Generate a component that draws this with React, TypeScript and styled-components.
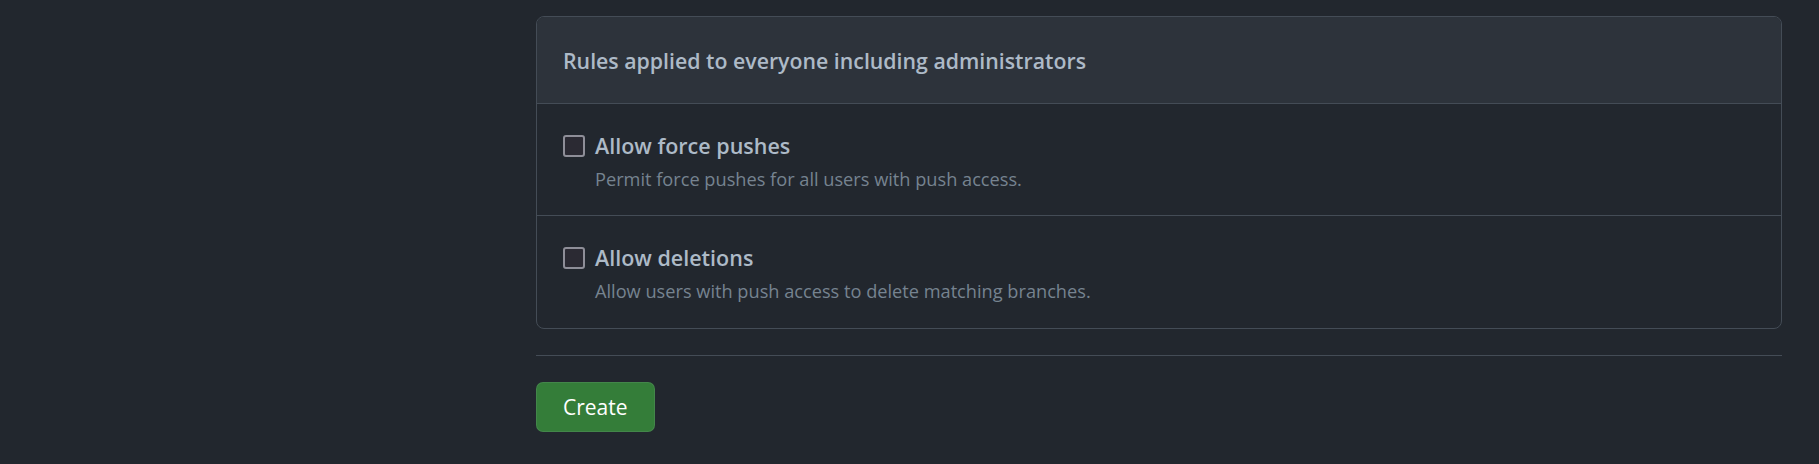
import React from "react";
import styled, { createGlobalStyle } from "styled-components";

const Global = createGlobalStyle`
  html, body {
    margin: 0;
    padding: 0;
    background: #22272e;
  }
  body {
    font-family: "Open Sans", "Noto Sans", "Liberation Sans", sans-serif;
    color: #adbac7;
  }
`;

const Page = styled.div`
  display: flex;
  justify-content: flex-start;
  padding: 16px 0 0 536px;
  min-height: 448px;
`;

const Column = styled.div`
  width: 1246px;
  display: flex;
  flex-direction: column;
`;

const Panel = styled.section`
  border: 1px solid #444c56;
  border-radius: 8px;
  overflow: hidden;
  background: #22272e;
`;

const PanelHeader = styled.header`
  height: 86px;
  display: flex;
  align-items: center;
  padding: 0 26px;
  background: #2d333b;
  border-bottom: 1px solid #444c56;
`;

const HeaderTitle = styled.h3`
  margin: 0;
  font-size: 21.3px;
  font-weight: 600;
  color: #adbac7;
`;

const Row = styled.div<{ $last?: boolean }>`
  height: 112px;
  box-sizing: border-box;
  padding: 28px 26px 0;
  border-bottom: ${(p) => (p.$last ? "none" : "1px solid #444c56")};
`;

const OptionLabel = styled.label`
  display: flex;
  align-items: center;
  gap: 10px;
  cursor: pointer;
`;

const Box = styled.span`
  width: 18px;
  height: 18px;
  border: 2px solid #8e8e98;
  border-radius: 3px;
  background: #2b2a33;
  flex: none;
`;

const OptionTitle = styled.span`
  font-size: 21.5px;
  font-weight: 600;
  color: #adbac7;
  line-height: 28px;
`;

const OptionNote = styled.p`
  margin: 7px 0 0 32px;
  font-size: 18.2px;
  color: #768390;
  line-height: 24px;
`;

const Divider = styled.hr`
  margin: 26px 0 0;
  border: 0;
  border-top: 1px solid #444c56;
  height: 0;
`;

const Actions = styled.div`
  display: flex;
  padding-top: 26px;
`;

const CreateButton = styled.button`
  height: 50px;
  padding: 0 26px;
  border-radius: 7px;
  border: 1px solid rgba(205, 217, 229, 0.1);
  background: #347d39;
  color: #ffffff;
  font-family: "Open Sans", "Noto Sans", sans-serif;
  font-size: 21px;
  font-weight: 400;
  cursor: pointer;
`;

const options = [
  {
    title: "Allow force pushes",
    note: "Permit force pushes for all users with push access.",
  },
  {
    title: "Allow deletions",
    note: "Allow users with push access to delete matching branches.",
  },
];

export default function App() {
  return (
    <>
      <Global />
      <Page>
        <Column>
          <Panel>
            <PanelHeader>
              <HeaderTitle>Rules applied to everyone including administrators</HeaderTitle>
            </PanelHeader>
            {options.map((o, i) => (
              <Row key={o.title} $last={i === options.length - 1}>
                <OptionLabel>
                  <Box />
                  <OptionTitle>{o.title}</OptionTitle>
                </OptionLabel>
                <OptionNote>{o.note}</OptionNote>
              </Row>
            ))}
          </Panel>
          <Divider />
          <Actions>
            <CreateButton>Create</CreateButton>
          </Actions>
        </Column>
      </Page>
    </>
  );
}
